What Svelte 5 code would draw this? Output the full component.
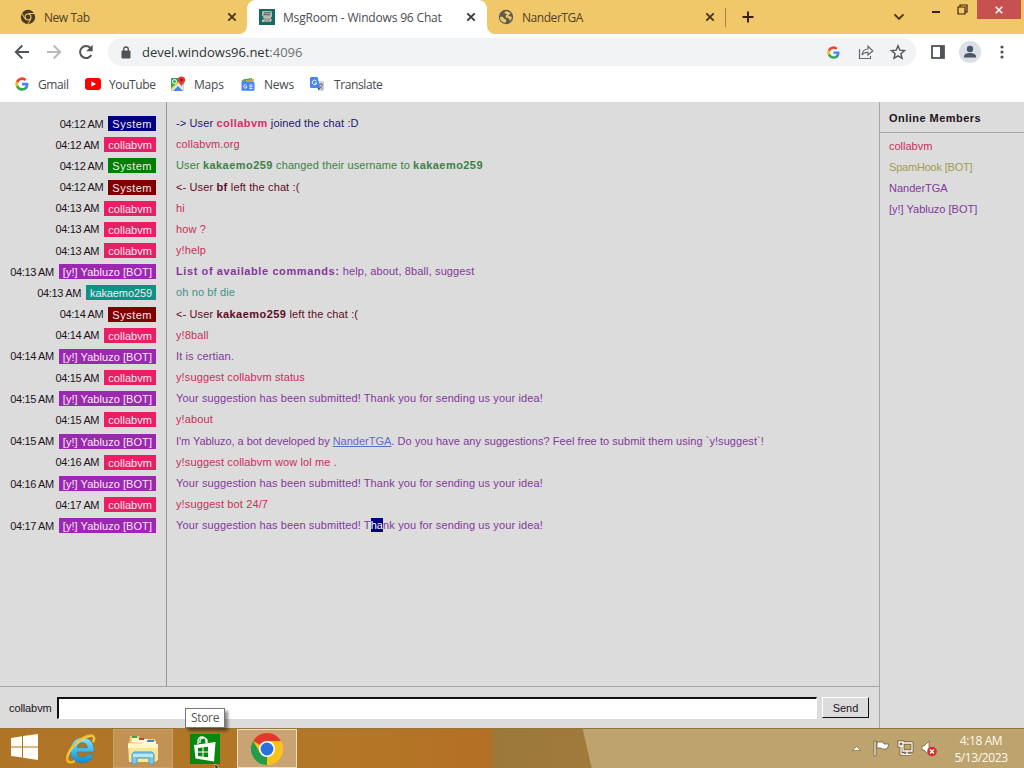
<script lang="ts">
    type Part = { text: string, kind?: string }
    type Message = { time: string, user: string, tag: string, parts: Part[] }

    const thanks = 'Your suggestion has been submitted! Thank you for sending us your idea!'
    const bot = '[y!] Yabluzo [BOT]'

    function say(time: string, user: string, tag: string, ...parts: (string | Part)[]): Message {
        return { time, user, tag, parts: parts.map((p) => typeof p === 'string' ? { text: p } : p) }
    }

    const messages: Message[] = [
        say('04:12 AM', 'System', 'navy', '-> User ', { text: 'collabvm', kind: 'bold pinkish' }, ' joined the chat :D'),
        say('04:12 AM', 'collabvm', 'pink', 'collabvm.org'),
        say('04:12 AM', 'System', 'green', 'User ', { text: 'kakaemo259', kind: 'bold' }, ' changed their username to ', { text: 'kakaemo259', kind: 'bold' }),
        say('04:12 AM', 'System', 'maroon', '<- User ', { text: 'bf', kind: 'bold' }, ' left the chat :('),
        say('04:13 AM', 'collabvm', 'pink', 'hi'),
        say('04:13 AM', 'collabvm', 'pink', 'how ?'),
        say('04:13 AM', 'collabvm', 'pink', 'y!help'),
        say('04:13 AM', bot, 'purple', { text: 'List of available commands:', kind: 'bold wide' }, ' help, about, 8ball, suggest'),
        say('04:13 AM', 'kakaemo259', 'teal', 'oh no bf die'),
        say('04:14 AM', 'System', 'maroon', '<- User ', { text: 'kakaemo259', kind: 'bold' }, ' left the chat :('),
        say('04:14 AM', 'collabvm', 'pink', 'y!8ball'),
        say('04:14 AM', bot, 'purple', 'It is certian.'),
        say('04:15 AM', 'collabvm', 'pink', 'y!suggest collabvm status'),
        say('04:15 AM', bot, 'purple', thanks),
        say('04:15 AM', 'collabvm', 'pink', 'y!about'),
        say('04:15 AM', bot, 'purple', { text: "I'm Yabluzo, a bot developed by ", kind: 'tight' }, { text: 'NanderTGA', kind: 'link' }, { text: '. Do you have any suggestions? Feel free to submit them using `y!suggest`!', kind: 'even' }),
        say('04:16 AM', 'collabvm', 'pink', 'y!suggest collabvm wow lol me .'),
        say('04:16 AM', bot, 'purple', thanks),
        say('04:17 AM', 'collabvm', 'pink', 'y!suggest bot 24/7'),
        say('04:17 AM', bot, 'purple', 'Your suggestion has been submitted! T', { text: 'ha', kind: 'selected' }, 'nk you for sending us your idea!'),
    ]

    const members = [
        { name: 'collabvm', tone: 'pink' },
        { name: 'SpamHook [BOT]', tone: 'olive' },
        { name: 'NanderTGA', tone: 'purple' },
        { name: bot, tone: 'purple' },
    ]
</script>

{#snippet google(size: number)}
    <svg width={size} height={size} viewBox="0 0 24 24">
        <path fill="#4285f4" d="M23 12.3c0-.8-.1-1.5-.2-2.3H12v4.5h6.200a5.300 5.300 0 0 1-2.300 3.500v3h3.800c2.100-2 3.300-5 3.300-8.700z" />
        <path fill="#34a853" d="M12 23.500c3.100 0 5.700-1 7.600-2.800l-3.800-2.900c-1 .7-2.300 1.100-3.800 1.100-3 0-5.500-2-6.400-4.700H1.800v3A11.500 11.500 0 0 0 12 23.500z" />
        <path fill="#fbbc05" d="M5.600 14.200a7 7 0 0 1 0-4.400v-3H1.800a11.500 11.500 0 0 0 0 10.400z" />
        <path fill="#ea4335" d="M12 5.100c1.700 0 3.200.6 4.400 1.700l3.300-3.300A11.500 11.500 0 0 0 1.800 6.800l3.800 3C6.500 7.100 9 5.100 12 5.100z" />
    </svg>
{/snippet}

{#snippet cross()}
    <svg class="cross" width="10" height="10" viewBox="0 0 10 10"><path d="M1.300 1.300l7.400 7.400M8.700 1.300L1.300 8.700" stroke="currentColor" stroke-width="1.900" /></svg>
{/snippet}

<div class="screen">
    <div class="tabs">
        <div class="tab first">
            <svg width="16" height="16" viewBox="0 0 16 16">
                <circle cx="8" cy="8" r="7.200" fill="#4c3b21" />
                <circle cx="8" cy="8" r="3.500" fill="#f0c869" />
                <circle cx="8" cy="8" r="2.400" fill="#4c3b21" />
                <path d="M8 4.500h7M5 9.800L1.500 3.900M11 9.800L7.600 15.500" stroke="#f0c869" stroke-width="1" />
            </svg>
            <span>New Tab</span>
            {@render cross()}
        </div>
        <div class="tab active">
            <svg width="16" height="16" viewBox="0 0 16 16">
                <rect width="16" height="16" fill="#176a60" />
                <path d="M4 2h8l1 1v5H5L3 7V3z" fill="#b4b6b2" />
                <path d="M5 3.800h6.500M4.500 5.800c2-.8 4 .6 6.500-.2" fill="none" stroke="#45615c" />
                <path d="M4 8h8v2H5zM3 11l1.500-1H13l-1 3H3z" fill="#c2c2bd" />
                <path d="M4 10h7.500M5 12h6" stroke="#545b58" stroke-width=".7" />
            </svg>
            <span>MsgRoom - Windows 96 Chat</span>
            {@render cross()}
        </div>
        <div class="tab last">
            <svg width="16" height="16" viewBox="0 0 16 16">
                <circle cx="8" cy="8" r="7.200" fill="#5f5a50" />
                <path d="M2 8c2-.4 3.200.2 3.700 1.200.5 1 1.600.5 2.300 1.300.6.800-.4 2-.2 3.200C4.800 14 1.800 11.600 2 8zM8 2.200c1.500 0 3.500.8 4.600 2.200-.5 1.200-1.500.6-2 1.400-.5.9.6 1.400 1.400 1.600.6.200 1.500 0 1.900.6-.2 1.500-.9 3-2 3.900-.8-.7-.2-2-1.200-2.600-1-.5-2.700-.1-2.900-1.600C7.700 6.200 9 6 8.800 5.200 8.500 4.500 7 5 6.500 4.200 6.300 3.500 7 2.600 8 2.200z" fill="#f0c869" />
            </svg>
            <span>NanderTGA</span>
            {@render cross()}
        </div>
        <div class="divider"></div>
        <svg class="plus" width="12" height="12" viewBox="0 0 12 12"><path d="M6 .5v11M.5 6h11" stroke="#35210d" stroke-width="2" /></svg>
        <div class="caption">
            <svg class="chevron" width="12" height="8" viewBox="0 0 12 8"><path d="M1.500 1.300L6 5.800l4.500-4.500" fill="none" stroke="#493715" stroke-width="1.900" /></svg>
            <svg class="minimise" width="8" height="2"><rect width="8" height="2" fill="#3b200c" /></svg>
            <svg class="restore" width="11" height="11" viewBox="0 0 11 11"><path d="M1 3h7v7H1zM3 3V1h7v7H8" fill="none" stroke="#3b200c" stroke-width="1.200" /></svg>
            <div class="close"><svg width="8" height="8" viewBox="0 0 8 8"><path d="M.7.7l6.600 6.600M7.300.7L.7 7.300" stroke="#fff" stroke-width="1.500" /></svg></div>
        </div>
    </div>

    <div class="toolbar">
        <svg width="16" height="16" viewBox="0 0 16 16"><path d="M15 8H2M8.300 1.500L1.800 8l6.500 6.500" fill="none" stroke="#505357" stroke-width="1.900" /></svg>
        <svg width="16" height="16" viewBox="0 0 16 16"><path d="M1 8h13M7.700 1.500L14.200 8l-6.500 6.500" fill="none" stroke="#b8babd" stroke-width="1.900" /></svg>
        <svg width="16" height="16" viewBox="0 0 16 16"><path d="M13.300 11A6 6 0 1 1 12.500 4" fill="none" stroke="#505357" stroke-width="2" /><path d="M14.700.8v6.500H8.200z" fill="#505357" /></svg>
        <div class="address">
            <svg width="10" height="13" viewBox="0 0 10 13"><rect x=".5" y="4.500" width="9" height="8" rx="1" fill="#505357" /><path d="M2.700 5V3.300a2.300 2.300 0 0 1 4.600 0V5" fill="none" stroke="#505357" stroke-width="1.300" /></svg>
            <span class="url">devel.windows96.net<em>:4096</em></span>
            {@render google(13)}
            <svg class="share" width="16" height="16" viewBox="0 0 16 16"><path d="M1.500 5v9.500h11V12M4 11c.5-3.800 2.500-6 6-6V2.200L14.800 7 10 11V8.300c-3-.2-4.600.7-6 2.700z" fill="none" stroke="#65686c" stroke-width="1.200" /></svg>
            <svg width="16" height="16" viewBox="0 0 16 16"><path d="M8 1.800l1.800 4.400 4.700.4-3.600 3.100 1.100 4.600L8 11.800l-4 2.500 1.100-4.600-3.600-3.100 4.700-.4z" fill="none" stroke="#505357" stroke-width="1.400" /></svg>
        </div>
        <svg class="panel" width="14" height="14" viewBox="0 0 14 14"><rect x="1" y="1" width="12" height="12" fill="none" stroke="#505357" stroke-width="1.800" /><rect x="9" y="1" width="4" height="12" fill="#505357" /></svg>
        <svg class="avatar" width="22" height="22" viewBox="0 0 22 22"><circle cx="11" cy="11" r="11" fill="#dcdfe5" /><circle cx="11" cy="8" r="3.200" fill="#4a5768" /><path d="M5 16.500v-1c0-2.400 3-3.500 6-3.500s6 1.100 6 3.500v1z" fill="#4a5768" /></svg>
        <svg class="dots" width="4" height="14" viewBox="0 0 4 14"><circle cx="2" cy="2" r="1.600" fill="#505357" /><circle cx="2" cy="7" r="1.600" fill="#505357" /><circle cx="2" cy="12" r="1.600" fill="#505357" /></svg>
    </div>

    <div class="bookmarks">
        <div class="bookmark gmail">{@render google(14)}<span>Gmail</span></div>
        <div class="bookmark youtube">
            <svg width="16" height="12" viewBox="0 0 16 12"><rect width="16" height="12" rx="3" fill="#f00" /><path d="M6.300 3.300v5.400L11 6z" fill="#fff" /></svg>
            <span>YouTube</span>
        </div>
        <div class="bookmark maps">
            <svg width="16" height="16" viewBox="0 0 16 16">
                <rect x="1" y="2" width="12.500" height="13" rx="1" fill="#34a853" />
                <path d="M1 14L13.500 2v12l-1 1H2z" fill="#e8e8e8" />
                <path d="M3 15l5-5 5 5z" fill="#4285f4" />
                <path d="M1 13.500L12 3" stroke="#fbd14b" stroke-width="1.700" />
                <circle cx="4.500" cy="5.500" r="2" fill="none" stroke="#fff" />
                <path d="M11.500.5a3.700 3.700 0 0 1 3.700 3.700c0 2.500-2.700 3.300-3.700 6.300-1-3-3.700-3.800-3.700-6.300A3.700 3.700 0 0 1 11.500.5z" fill="#e53935" />
                <circle cx="11.500" cy="4" r="1.300" fill="#811411" />
            </svg>
            <span>Maps</span>
        </div>
        <div class="bookmark news">
            <svg width="14" height="14" viewBox="0 0 14 14">
                <path d="M2 2.500L11 1v5H2z" fill="#34a853" /><path d="M5 3l8-1-1 5H4z" fill="#c9a53a" />
                <path d="M.5 3.500l4-1v4H1z" fill="#6b9b66" />
                <rect x=".5" y="5" width="13" height="8.700" rx="1" fill="#4285f4" />
                <path d="M5.500 8.200a1.700 1.700 0 1 0 .5 1.600H4.500M8.300 8h3.200M8.300 9.700h3.200M8.300 11.400h3.200" fill="none" stroke="#fff" stroke-width=".9" />
            </svg>
            <span>News</span>
        </div>
        <div class="bookmark translate">
            <svg width="14" height="14" viewBox="0 0 14 14">
                <path d="M6 4h7l1 1v8l-1 1H9z" fill="#cfd2d8" /><path d="M1 0h6.500L10 11H1l-1-1V1z" fill="#4285f4" />
                <path d="M6.300 3.900A2.300 2.300 0 1 0 6.800 6H4.800" fill="none" stroke="#fff" />
                <path d="M8.800 7.300h4.300M11 6v1.300M9.500 8.500c.6 1.400 1.600 2.500 3 3.300M12.500 7.500c-.5 1.900-1.400 3.200-3 4.300" fill="none" stroke="#697080" stroke-width=".9" />
                <path d="M7.500 11H10l-1.400 2.500z" fill="#2850a7" />
            </svg>
            <span>Translate</span>
        </div>
    </div>

    <div class="page">
        <div class="chat">
            <div class="log">
                {#each messages as m}
                    <div class="row">
                        <div class="who"><span class="time">{m.time}</span><span class="tag {m.tag}">{m.user}</span></div>
                        <div class="text {m.tag}">{#each m.parts as p}<span class={p.kind}>{p.text}</span>{/each}</div>
                    </div>
                {/each}
                <div class="row rest"><div class="who"></div></div>
            </div>
            <div class="compose">
                <span>collabvm</span>
                <input type="text" aria-label="Message" />
                <button>Send</button>
            </div>
        </div>
        <div class="members">
            <h2>Online Members</h2>
            <ul>
                {#each members as m}
                    <li class={m.tone}>{m.name}</li>
                {/each}
            </ul>
        </div>
    </div>

    <div class="taskbar">
        <div class="start">
            <svg width="27" height="26" viewBox="0 0 27 26"><path d="M0 4l11-1.700v10.200H0zM12 2.100L27 0v12.500H12zM0 13.500h11v10L0 22zM12 13.500h15V26l-15-2.300z" fill="#fffdf5" /></svg>
        </div>
        <div class="task ie">
            <svg width="34" height="34" viewBox="0 0 34 34">
                <defs><linearGradient id="ie" x2="0" y2="1"><stop offset="0" stop-color="#8be7fb" /><stop offset=".55" stop-color="#39b9e9" /><stop offset="1" stop-color="#1588c8" /></linearGradient></defs>
                <path d="M30 20H13c.3 3.500 2.200 5.300 5.200 5.300 2.200 0 3.700-.9 4.600-2.500h6.500C27.600 27.800 23.800 31 18 31c-7 0-11.500-4.700-11.500-12.500C6.500 11 11.500 5.500 18.200 5.500 25.800 5.500 30.500 11 30 20zm-6.500-4.300c-.2-3-2-5-5.200-5-2.900 0-4.800 1.900-5.200 5z" fill="url(#ie)" stroke="#347d9b" stroke-width=".6" />
                <path d="M29 10.500c2.300-4.500 1.300-7.500-2.500-7C18 4.500 5 15 3.300 25c-1 6 3 6.500 7.700 4" fill="none" stroke="#f5bb25" stroke-width="2.300" />
                <path d="M29 9c1.500-4-.2-5.200-3.500-4.400C17.500 6.500 6 16.500 4.200 24" fill="none" stroke="#ffe37a" stroke-width=".8" />
            </svg>
        </div>
        <div class="task files">
            <svg width="34" height="32" viewBox="0 0 34 32">
                <path d="M4 3h9l1 3h15v7H3z" fill="#e9cf72" />
                <path d="M6 5h8v4H6zM13 6h9v5h-9zM21 8h9v5h-9z" fill="#fff8e4" />
                <path d="M6 3h5v2H6z" fill="#42a441" /><path d="M13 5h5v2h-5z" fill="#cd4330" /><path d="M21 7h7v2h-7z" fill="#3e8bc1" />
                <path d="M2 10l13-1 2 2h15v16l-3 2H3z" fill="#f8e596" />
                <path d="M2 11h30v4H2z" fill="#fff5c7" />
                <path d="M6 31V21l2-2h18l2 2v10h-5v-6H11v6z" fill="#80c6e4" stroke="#4a9fc6" /><path d="M7 21h20v3H7z" fill="#b8e9f6" />
            </svg>
        </div>
        <div class="task store">
            <svg width="30" height="30" viewBox="0 0 30 30">
                <rect width="30" height="30" fill="#0a8710" />
                <path d="M8 10V7a4 4 0 0 1 8 0v2M10 9V6a4 4 0 0 1 7 0v3" fill="none" stroke="#fff" stroke-width="1.300" />
                <path d="M4 11l21.500-3L24 27.500 5.500 24.500z" fill="#fff" />
                <path d="M8 14l4.500-.6v4.100H8zM13.500 13.300l4.500-.6v4.800h-4.500zM8 18.500h4.500v4.100L8 22zM13.500 18.500H18v4.800l-4.500-.6z" fill="#0a8710" />
            </svg>
            <svg class="cursor" width="6" height="4" viewBox="0 0 6 4"><path d="M1 0v4h4z" fill="#111" stroke="#fff" stroke-width=".5" /></svg>
            <div class="tooltip">Store</div>
        </div>
        <div class="task chrome">
            <svg width="32" height="32" viewBox="0 0 32 32">
                <circle cx="16" cy="16" r="16" fill="#fbc21b" />
                <path d="M16 16L2.140 8A16 16 0 0 1 29.860 8z" fill="#e3392d" />
                <path d="M16 16L16 32A16 16 0 0 1 2.140 8l7 12z" fill="#229c4a" />
                <path d="M16 8h13.860A16 16 0 0 1 16 32l7-12z" fill="#fbc21b" />
                <circle cx="16" cy="16" r="8" fill="#fff" /><circle cx="16" cy="16" r="6.400" fill="#2b71dd" />
            </svg>
        </div>
        <div class="tray">
            <svg class="up" width="9" height="5" viewBox="0 0 9 5"><path d="M.5 4.500L4.500.7l4 3.800z" fill="#fff" stroke="#775c37" stroke-width=".6" /></svg>
            <svg class="flag" width="17" height="17" viewBox="0 0 17 17"><path d="M1 1h2v15H1zM4 2h6l1 2h5l-2 5H9L8 8H4z" fill="#fff" stroke="#725b32" stroke-width=".8" /></svg>
            <svg class="net" width="17" height="17" viewBox="0 0 17 17"><path d="M6 3h9v8H6zM10 11v3M6 14.500h8M2 2h4v4H2zM4 6v8h3" fill="none" stroke="#685230" stroke-width="2.800" /><path d="M6 3h9v8H6zM10 11v3M6 14.500h8M2 2h4v4H2zM4 6v8h3" fill="none" stroke="#fff" stroke-width="1.300" /></svg>
            <svg class="sound" width="17" height="17" viewBox="0 0 17 17"><path d="M1 6h2l5-5v14l-5-5H1z" fill="#fff" stroke="#72572e" stroke-width=".7" /><circle cx="11" cy="11.500" r="4.800" fill="#d62e32" /><path d="M9 9.500l4 4M13 9.500l-4 4" stroke="#fff" stroke-width="1.400" /></svg>
            <div class="clock"><span>4:18 AM</span><span>5/13/2023</span></div>
        </div>
    </div>
</div>

<style>
    :global(body) {
        margin: 0;
        overflow: hidden;
    }

    .screen {
        width: 1024px;
        height: 768px;
        display: flex;
        flex-direction: column;
        font-family: "Open Sans", "Noto Sans", sans-serif;
        font-size: 12px;
        color: #45484c;
        background: #fff;
        overflow: hidden;
    }

    svg {
        display: block;
        flex: none;
    }

    .tabs {
        height: 34px;
        display: flex;
        align-items: center;
        background: #fff;
    }
    .tab {
        box-sizing: border-box;
        height: 34px;
        display: flex;
        align-items: center;
        gap: 8px;
        background: #f0c869;
        color: #514126;
        white-space: nowrap;
        letter-spacing: -0.45px;
    }
    .tab .cross {
        margin-left: auto;
        color: #49351d;
    }
    .first {
        width: 247px;
        padding: 0 10px 0 20px;
        border-radius: 0 0 8px 0;
    }
    .active {
        width: 240px;
        padding: 0 11px 0 12px;
        background: #fff;
        color: #494c50;
        letter-spacing: -0.17px;
        position: relative;
    }
    .active::before, .active::after {
        content: "";
        position: absolute;
        top: 0;
        width: 8px;
        height: 8px;
    }
    .active::before {
        left: 0;
        background: radial-gradient(circle at 100% 100%, #fff 7.5px, #f0c869 8px);
    }
    .active::after {
        right: 0;
        background: radial-gradient(circle at 0 100%, #fff 7.5px, #f0c869 8px);
    }
    .active .cross {
        color: #35383b;
    }
    .last {
        width: 238px;
        padding: 0 10px 0 11px;
        border-radius: 0 0 0 8px;
    }
    .divider {
        width: 1px;
        height: 34px;
        background: linear-gradient(#f0c869 8px, #a48745 8px 27px, #f0c869 27px);
    }
    .plus {
        padding: 11px 16px;
        background: #f0c869;
    }
    .caption {
        flex: 1;
        height: 34px;
        display: flex;
        background: #f0c869;
    }
    .chevron {
        margin: 13px 0 0 123px;
    }
    .minimise {
        margin: 11px 0 0 27px;
    }
    .restore {
        margin: 4px 0 0 17px;
    }
    .close {
        margin-left: 9px;
        width: 44px;
        height: 19px;
        display: flex;
        align-items: center;
        justify-content: center;
        background: #c75050;
    }

    .toolbar {
        height: 36px;
        display: flex;
        align-items: center;
        gap: 16px;
        padding-left: 14px;
    }
    .address {
        box-sizing: border-box;
        width: 808px;
        height: 28px;
        margin-left: -2px;
        padding: 0 10px 0 13px;
        display: flex;
        align-items: center;
        gap: 16px;
        border-radius: 14px;
        background: #f1f3f4;
        font-size: 13px;
        color: #303336;
    }
    .url {
        flex: 1;
        margin-left: -5px;
    }
    .url em {
        font-style: normal;
        color: #6c7074;
    }
    .share {
        margin-left: 2px;
    }
    .panel {
        margin-left: -1px;
    }
    .avatar {
        margin-left: -2px;
    }
    .dots {
        margin-left: 3px;
    }

    .bookmarks {
        height: 32px;
        padding: 0 0 4px 15px;
        box-sizing: border-box;
        display: flex;
        align-items: center;
        letter-spacing: -0.4px;
    }
    .bookmark {
        display: flex;
        align-items: center;
        gap: 8px;
    }
    .gmail { width: 70px; gap: 9px; }
    .youtube { width: 85px; }
    .maps { width: 71px; letter-spacing: -0.2px; }
    .news { width: 69px; gap: 9px; letter-spacing: -0.2px; }
    .translate { gap: 10px; }

    .page {
        height: 626px;
        display: flex;
        background: #dcdcdc;
        font-family: "Liberation Sans", Arial, sans-serif;
        font-size: 11px;
        color: #1c1220;
    }
    .chat {
        width: 879px;
        display: flex;
        flex-direction: column;
        border-right: 1px solid #a5a5a5;
    }
    .log {
        height: 584px;
        box-sizing: border-box;
        display: flex;
        flex-direction: column;
    }
    .log::before {
        content: "";
        width: 166px;
        height: 11px;
        border-right: 1px solid #999;
    }
    .row {
        height: 21.180px;
        flex: none;
        display: flex;
        align-items: center;
        white-space: pre;
    }
    .rest {
        flex: 1;
        height: auto;
    }
    .who {
        box-sizing: border-box;
        width: 167px;
        height: 100%;
        padding-right: 10px;
        display: flex;
        align-items: center;
        justify-content: flex-end;
        gap: 5px;
        border-right: 1px solid #999;
    }
    .time {
        letter-spacing: -0.35px;
    }
    .tag {
        height: 15px;
        line-height: 16px;
        padding: 0 4px;
        color: #f7e9f5;
        letter-spacing: 0.05px;
    }
    .tag.navy { background: #000080; }
    .tag.pink { background: #e91e63; }
    .tag.green { background: #008000; }
    .tag.maroon { background: #800000; }
    .tag.purple { background: #9c27b0; }
    .tag.teal {
        background: #0b9485;
        letter-spacing: -0.1px;
    }
    .tag.navy, .tag.green, .tag.maroon {
        letter-spacing: 0.5px;
    }
    .text {
        padding: 0 0 1px 9px;
        letter-spacing: 0.12px;
    }
    .text.navy { color: #1d1570; }
    .text.pink, li.pink { color: #c92f59; }
    .text.green { color: #3d8046; }
    .text.maroon { color: #5c0d25; }
    .text.purple, li.purple { color: #83389a; }
    .text.teal { color: #3b9486; }
    .olive {
        color: #a29b52;
        letter-spacing: -0.2px;
    }
    .bold {
        font-weight: bold;
        letter-spacing: 0.45px;
    }
    .wide { letter-spacing: 0.6px; }
    .tight { letter-spacing: -0.05px; }
    .even { letter-spacing: 0.06px; }
    .text .pinkish { color: #d92e62; }
    .link {
        color: #5872bd;
        text-decoration: underline;
        letter-spacing: 0;
    }
    .selected {
        background: #000080;
        color: #fff;
        padding: 1px 0;
    }

    .compose {
        height: 42px;
        box-sizing: border-box;
        padding: 0 10px 0 9px;
        display: flex;
        align-items: center;
        border-top: 1px solid #a5a5a5;
    }
    .compose span {
        width: 48px;
        letter-spacing: -0.1px;
    }
    .compose input {
        box-sizing: border-box;
        flex: 1;
        min-width: 0;
        height: 22px;
        border: 1px solid;
        border-color: #111 #fff #fff #111;
        border-top-width: 2px;
        border-left-width: 2px;
        background: #fff;
        outline: none;
    }
    .compose button {
        width: 47px;
        height: 21px;
        margin-left: 5px;
        padding: 0;
        border: 1px solid;
        border-color: #fff #111 #111 #fff;
        background: #dcdcdc;
        color: #1c1220;
        font: inherit;
    }

    .members {
        flex: 1;
    }
    h2 {
        margin: 0;
        height: 31px;
        padding: 1px 0 0 9px;
        box-sizing: border-box;
        line-height: 30px;
        font-size: 11px;
        letter-spacing: 0.47px;
        border-bottom: 1px solid #a5a5a5;
    }
    ul {
        margin: 0;
        padding: 3px 0 0 9px;
        list-style: none;
    }
    li {
        height: 21px;
        line-height: 21px;
    }

    .taskbar {
        height: 40px;
        box-sizing: border-box;
        border-top: 1px solid #96733c;
        display: flex;
        position: relative;
        background:
            linear-gradient(77deg, transparent 576px, #bda36e 577px),
            linear-gradient(90deg, #b07427, #b37727 350px, #b46f25 490px, #9b793a 495px, #a17a3a 600px);
    }
    .start {
        width: 53px;
        padding: 5px 0 0 11px;
        box-sizing: border-box;
    }
    .task {
        box-sizing: border-box;
        width: 60px;
        height: 39px;
        display: flex;
        align-items: center;
        justify-content: center;
        position: relative;
    }
    .ie {
        padding-right: 4px;
    }
    .files {
        border: 1px solid #cba066;
        background: #c29254;
    }
    .store {
        width: 64px;
    }
    .chrome {
        border: 1px solid #f3dfbd;
        background: #caa375;
    }
    .cursor {
        position: absolute;
        left: 41px;
        bottom: 0;
    }
    .tooltip {
        position: absolute;
        left: 12px;
        top: -21px;
        width: 38px;
        height: 18px;
        line-height: 18px;
        text-align: center;
        letter-spacing: -0.3px;
        border: 1px solid #777;
        background: #fff;
        color: #575757;
        box-shadow: 3px 3px 3px rgba(0, 0, 0, 0.45);
    }
    .tray {
        flex: 1;
        display: flex;
        align-items: center;
        justify-content: flex-end;
        color: #fff8ed;
    }
    .flag { margin-left: 12px; }
    .net { margin-left: 7px; }
    .sound { margin-left: 7px; }
    .clock {
        width: 86px;
        display: flex;
        flex-direction: column;
        align-items: center;
        line-height: 17px;
        letter-spacing: -0.4px;
    }
</style>
